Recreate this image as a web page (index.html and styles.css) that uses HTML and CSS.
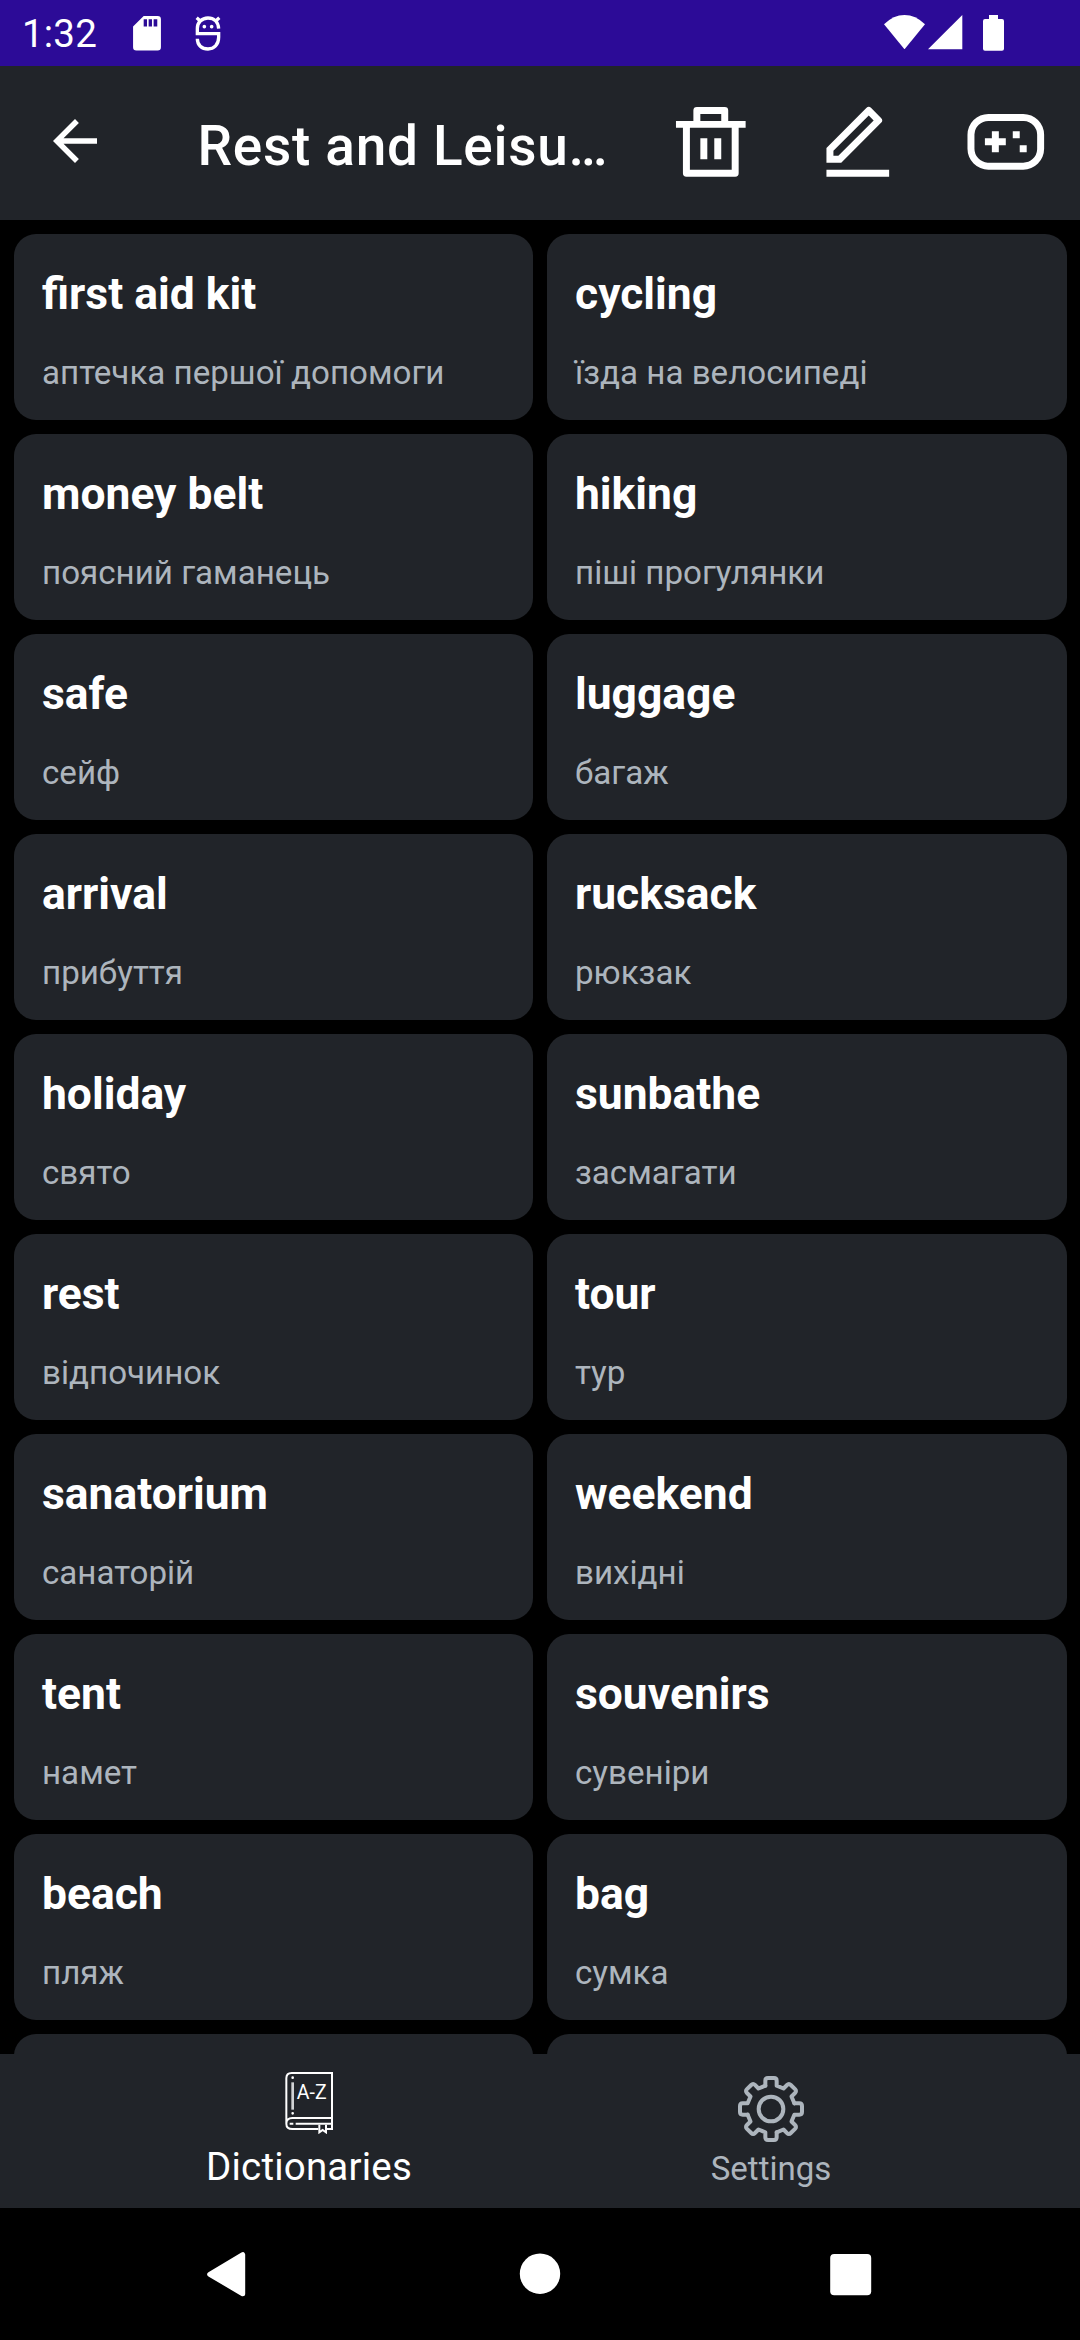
FILE: index.html
```html
<!DOCTYPE html>
<html lang="en">
<head>
<meta charset="utf-8">
<title>Rest and Leisure</title>
<link rel="stylesheet" href="styles.css">
</head>
<body>
<div class="screen">
  <div class="status-bar">
    <span class="clock">1:32</span>
    <svg class="sd" viewBox="0 0 84 104"><path fill="#fff" fill-rule="evenodd" d="M32 0H74Q84 0 84 10V94Q84 104 74 104H10Q0 104 0 94V32ZM32 10V32H42V10ZM47 10V32H57V10ZM62 10V32H73V10Z"/></svg>
    <svg class="debug" viewBox="0 0 78 106" fill="none" stroke="#fff" stroke-width="10"><path d="M71 38C70 17 56 6 39 6C20 6 7 20 7 37V53H71V64C71 86 57 99 39 99C20 99 7 87 7 68"/><path d="M5 5L15 14M73 5L63 14"/><circle cx="28" cy="32" r="5.500" fill="#fff" stroke="none"/><circle cx="50" cy="32" r="5.500" fill="#fff" stroke="none"/></svg>
    <span class="spacer"></span>
    <svg class="wifi" viewBox="0 0 123 103"><path fill="#fff" d="M0 28Q28 0 61.500 0T123 28L61.500 103Z"/></svg>
    <svg class="signal" viewBox="0 0 103 103"><path fill="#fff" d="M103 0V103H0Z"/></svg>
    <svg class="battery" viewBox="0 0 63 107"><path fill="#fff" d="M18 0H45V12H57Q63 12 63 18V101Q63 107 57 107H6Q0 107 0 101V18Q0 12 6 12H18Z"/></svg>
  </div>
  <header class="app-bar">
    <svg class="back" viewBox="0 0 24 24"><path fill="#fff" d="M20 11H7.83l5.59-5.59L12 4l-8 8 8 8 1.410-1.410L7.830 13H20v-2z"/></svg>
    <h1 class="title">Rest and Leisu…</h1>
    <div class="actions">
      <svg class="action" viewBox="0 0 24 24"><path fill="#fff" d="M17 6h5v2h-2v13a1 1 0 0 1-1 1H5a1 1 0 0 1-1-1V8H2V6h5V3a1 1 0 0 1 1-1h8a1 1 0 0 1 1 1v3zm1 2H6v12h12V8zm-9 3h2v6H9v-6zm4 0h2v6h-2v-6zM9 4v2h6V4H9z"/></svg>
      <svg class="action" viewBox="0 0 24 24"><path fill="#fff" d="M6.414 16L16.556 5.858l-1.414-1.414L5 14.586V16h1.414zm.829 2H3v-4.243L14.435 2.322a1 1 0 0 1 1.414 0l2.829 2.829a1 1 0 0 1 0 1.414L7.243 18zM3 20h18v2H3v-2z"/></svg>
      <svg class="action" viewBox="0 0 24 24"><path fill="#fff" d="M17 4a6 6 0 0 1 6 6v4a6 6 0 0 1-6 6H7a6 6 0 0 1-6-6v-4a6 6 0 0 1 6-6h10zm0 2H7a4 4 0 0 0-3.995 3.8L3 10v4a4 4 0 0 0 3.8 3.995L7 18h10a4 4 0 0 0 3.995-3.800L21 14v-4a4 4 0 0 0-3.800-3.995L17 6zm-7 3v2h2v2H9.999L10 15H8l-.001-2H6v-2h2V9h2zm8 4v2h-2v-2h2zm-2-4v2h-2V9h2z"/></svg>
    </div>
  </header>
  <main class="words">
    <div class="card"><b class="word">first aid kit</b><span class="translation">аптечка першої допомоги</span></div>
    <div class="card"><b class="word">cycling</b><span class="translation">їзда на велосипеді</span></div>
    <div class="card"><b class="word">money belt</b><span class="translation">поясний гаманець</span></div>
    <div class="card"><b class="word">hiking</b><span class="translation">піші прогулянки</span></div>
    <div class="card"><b class="word">safe</b><span class="translation">сейф</span></div>
    <div class="card"><b class="word">luggage</b><span class="translation">багаж</span></div>
    <div class="card"><b class="word">arrival</b><span class="translation">прибуття</span></div>
    <div class="card"><b class="word">rucksack</b><span class="translation">рюкзак</span></div>
    <div class="card"><b class="word">holiday</b><span class="translation">свято</span></div>
    <div class="card"><b class="word">sunbathe</b><span class="translation">засмагати</span></div>
    <div class="card"><b class="word">rest</b><span class="translation">відпочинок</span></div>
    <div class="card"><b class="word">tour</b><span class="translation">тур</span></div>
    <div class="card"><b class="word">sanatorium</b><span class="translation">санаторій</span></div>
    <div class="card"><b class="word">weekend</b><span class="translation">вихідні</span></div>
    <div class="card"><b class="word">tent</b><span class="translation">намет</span></div>
    <div class="card"><b class="word">souvenirs</b><span class="translation">сувеніри</span></div>
    <div class="card"><b class="word">beach</b><span class="translation">пляж</span></div>
    <div class="card"><b class="word">bag</b><span class="translation">сумка</span></div>
    <div class="card"></div>
    <div class="card"></div>
  </main>
  <nav class="tabs">
    <div class="tab tab-active">
      <svg class="book" viewBox="45 54 198 198" fill="none" stroke="#fff" stroke-width="6">
        <path d="M213 204V69H92Q76 69 76 85V220M213 204H94Q76 204 76 221Q76 237 94 237H172M198 237H213V204"/>
        <path d="M86 221H97M104 221H213"/>
        <path stroke="#d0d2d4" stroke-width="8" d="M95 97V179"/>
        <path stroke-width="8" stroke-linecap="round" d="M95 83v.1M95 190v.1"/>
        <path d="M175 224V247L185 240L195 247V224"/>
        <text class="book-text" x="107" y="147" textLength="90" lengthAdjust="spacingAndGlyphs">A-Z</text>
      </svg>
      <span class="tab-label">Dictionaries</span>
    </div>
    <div class="tab">
      <svg class="gear" viewBox="-99 -99 198 198" fill="none" stroke="#adb5bd" stroke-width="12" stroke-linejoin="round" stroke-linecap="round">
        <path id="teeth" d="M-17-70V-85Q-17-93-9-93H9Q17-93 17-85V-70L37.500-61.500L48.100-72.100Q53.700-77.800 59.400-72.100L72.100-59.400Q77.800-53.700 72.100-48.100L61.500-37.500L70-17"/>
        <use href="#teeth" transform="rotate(90)"/><use href="#teeth" transform="rotate(180)"/><use href="#teeth" transform="rotate(270)"/>
        <circle r="37"/>
      </svg>
      <span class="tab-label">Settings</span>
    </div>
  </nav>
  <div class="system-nav">
    <svg class="sys-icon" viewBox="0 0 46 46"><path fill="#fff" stroke="#fff" stroke-width="5" stroke-linejoin="round" d="M3.700 23.300L36.700 3.700V42.800Z"/></svg>
    <svg class="sys-icon" viewBox="0 0 46 46"><circle cx="23" cy="22.700" r="20.200" fill="#fff"/></svg>
    <svg class="sys-icon" viewBox="0 0 46 46"><rect x="2.200" y="3" width="41" height="41.300" rx="4" fill="#fff"/></svg>
  </div>
</div>
</body>
</html>
```
FILE: styles.css
```css
* { box-sizing: border-box; }
body { margin: 0; background: #000; font-family: Roboto, sans-serif; color: #fff; }
svg { display: block; flex: none; }
.screen { width: 1080px; height: 2340px; display: flex; flex-direction: column; overflow: hidden; }

.status-bar { height: 66px; flex: none; background: #2c0b97; display: flex; align-items: flex-start; padding: 0 76px 0 22px; }
.clock { font-size: 38.5px; line-height: 46px; padding-top: 11px; width: 110.500px; letter-spacing: 0.2px; }
.sd { width: 28px; height: 34.500px; margin-top: 16px; }
.debug { width: 26px; height: 35.300px; margin: 15.500px 0 0 34px; }
.spacer { flex: 1; }
.wifi { width: 41px; height: 34.300px; margin-top: 15px; }
.signal { width: 34.300px; height: 34.300px; margin: 15.300px 0 0 3.500px; }
.battery { width: 21px; height: 35.700px; margin: 15px 0 0 20.500px; }

.app-bar { height: 154px; flex: none; background: #212429; display: flex; align-items: flex-start; }
.back { width: 66px; height: 66px; margin: 42px 0 0 42px; }
.title { margin: 48px 0 0 89.500px; width: 439px; font-size: 55px; line-height: 64px; font-weight: 500; letter-spacing: 0.6875px; white-space: nowrap; }
.actions { display: flex; width: 443.500px; margin-top: 34.300px; justify-content: space-around; }
.action { width: 83.600px; height: 83.600px; }

.words { flex: 1; min-height: 0; overflow: hidden; display: grid; grid-template-columns: 519px 520px; grid-auto-rows: 186px; gap: 14px; padding: 14px 0 0 14px; align-content: start; }
.card { background: #212429; border-radius: 22px; padding: 34px 28px 0; display: flex; flex-direction: column; gap: 33px; white-space: nowrap; }
.word { font-size: 44.4px; line-height: 52px; font-weight: 700; }
.translation { font-size: 33.15px; line-height: 39px; color: #adb5bd; }

.tabs { height: 154px; flex: none; background: #212429; display: flex; justify-content: center; }
.tab { width: 462px; display: flex; flex-direction: column; align-items: center; color: #adb5bd; font-size: 33px; line-height: 40px; padding-top: 22px; gap: 7px; }
.tab-active { color: #fff; font-size: 38.500px; letter-spacing: 0.2px; padding-top: 14px; gap: 13px; }
.book, .gear { width: 66px; height: 66px; }
.book-text { font-family: Roboto, sans-serif; font-size: 60px; font-weight: 400; fill: #fff; stroke: none; }

.system-nav { height: 132px; flex: none; background: #000; display: flex; justify-content: space-between; padding: 43px 206px 0; }
.sys-icon { width: 46px; height: 46px; }
```
